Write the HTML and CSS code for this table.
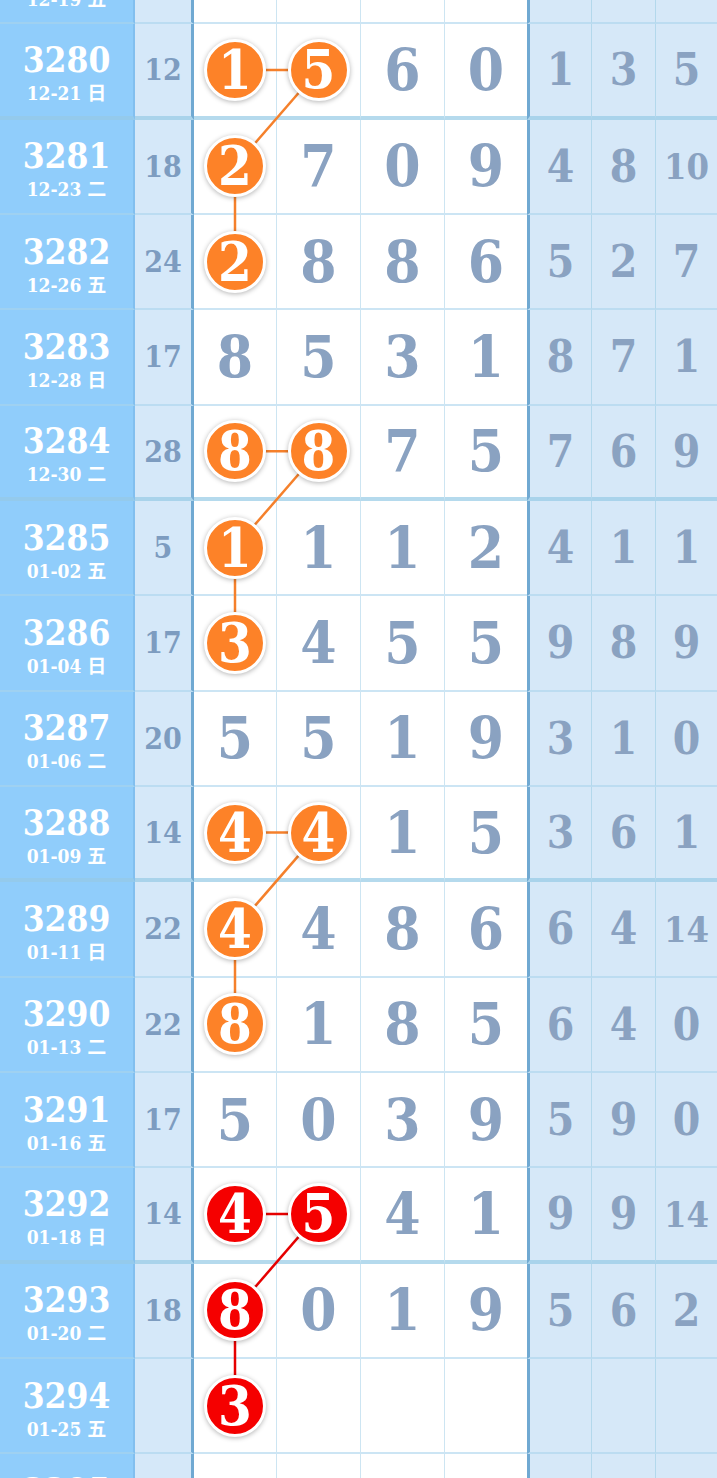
FILE: index.html
```html
<!DOCTYPE html>
<html lang="zh">
<head>
    <meta charset="UTF-8">
    <meta name="viewport" content="width=device-width, initial-scale=1.0">
    <title>走势图</title>
    <link rel="stylesheet" href="styles.css">
</head>
<body>
    <div class="chart" id="chart">
        <svg class="links" id="links"></svg>
    </div>

    <script>
        // issue, date, sum, four digits, three spans, balls (column indexes), group, colour
        const rows = [
            ["3279", "12-19 五", "", ["", "", "", ""], ["", "", ""], [], 0, ""],
            ["3280", "12-21 日", "12", ["1", "5", "6", "0"], ["1", "3", "5"], [0, 1], 1, "orange"],
            ["3281", "12-23 二", "18", ["2", "7", "0", "9"], ["4", "8", "10"], [0], 1, "orange"],
            ["3282", "12-26 五", "24", ["2", "8", "8", "6"], ["5", "2", "7"], [0], 1, "orange"],
            ["3283", "12-28 日", "17", ["8", "5", "3", "1"], ["8", "7", "1"], [], 0, ""],
            ["3284", "12-30 二", "28", ["8", "8", "7", "5"], ["7", "6", "9"], [0, 1], 2, "orange"],
            ["3285", "01-02 五", "5", ["1", "1", "1", "2"], ["4", "1", "1"], [0], 2, "orange"],
            ["3286", "01-04 日", "17", ["3", "4", "5", "5"], ["9", "8", "9"], [0], 2, "orange"],
            ["3287", "01-06 二", "20", ["5", "5", "1", "9"], ["3", "1", "0"], [], 0, ""],
            ["3288", "01-09 五", "14", ["4", "4", "1", "5"], ["3", "6", "1"], [0, 1], 3, "orange"],
            ["3289", "01-11 日", "22", ["4", "4", "8", "6"], ["6", "4", "14"], [0], 3, "orange"],
            ["3290", "01-13 二", "22", ["8", "1", "8", "5"], ["6", "4", "0"], [0], 3, "orange"],
            ["3291", "01-16 五", "17", ["5", "0", "3", "9"], ["5", "9", "0"], [], 0, ""],
            ["3292", "01-18 日", "14", ["4", "5", "4", "1"], ["9", "9", "14"], [0, 1], 4, "red"],
            ["3293", "01-20 二", "18", ["8", "0", "1", "9"], ["5", "6", "2"], [0], 4, "red"],
            ["3294", "01-25 五", "", ["3", "", "", ""], ["", "", ""], [0], 4, "red"],
            ["3295", "01-27 日", "", ["", "", "", ""], ["", "", ""], [], 0, ""]
        ];

        const chart = document.getElementById("chart");
        let html = "";

        rows.forEach(([issue, date, sum, nums, spans, balls, group, colour]) => {
            const sep = Number(issue) % 4 === 0 ? " sep" : "";
            html += `<div class="row${sep}">
                <div class="issue"><b>${issue}</b><span>${date}</span></div>
                <div class="sum">${sum}</div>`;
            nums.forEach((n, i) => {
                const cell = balls.includes(i)
                    ? `<span class="ball ${colour}" data-g="${group}">${n}</span>`
                    : n;
                html += `<div class="num">${cell}</div>`;
            });
            spans.forEach(s => {
                const small = s.length > 1 ? " small" : "";
                html += `<div class="span${small}">${s}</div>`;
            });
            html += `</div>`;
        });

        chart.insertAdjacentHTML("beforeend", html);

        // Join the balls of one group with lines
        const svg = document.getElementById("links");
        const box = chart.getBoundingClientRect();
        const ballEls = [...document.querySelectorAll(".ball")];
        let lines = "";

        ballEls.forEach((ball, i) => {
            const next = ballEls[i + 1];
            if (!next || next.dataset.g !== ball.dataset.g) return;
            const a = ball.getBoundingClientRect();
            const b = next.getBoundingClientRect();
            const colour = ball.classList.contains("red") ? "#e60000" : "#f5802b";
            lines += `<line x1="${a.left + a.width / 2 - box.left}" y1="${a.top + a.height / 2 - box.top}"
                x2="${b.left + b.width / 2 - box.left}" y2="${b.top + b.height / 2 - box.top}"
                stroke="${colour}" stroke-width="2.5" />`;
        });

        svg.innerHTML = lines;
    </script>
</body>
</html>
```

FILE: styles.css
```css
body {
    margin: 0;
    background: #fff;
    overflow: hidden;
    font-family: "DejaVu Serif Condensed", "DejaVu Serif", "Noto Sans CJK SC", serif;
    font-stretch: condensed;
    font-weight: bold;
}
.chart {
    position: relative;
    margin-top: -71px;
}
.links {
    position: absolute;
    top: 0;
    left: 0;
    width: 100%;
    height: 100%;
    z-index: 1;
    pointer-events: none;
}
.row {
    display: grid;
    grid-template-columns: 135px 59px 83px 84px 84px 82px 65px 64px 1fr;
    height: 95.33px;
}
.row > div {
    box-sizing: border-box;
    display: flex;
    align-items: center;
    justify-content: center;
    border-bottom: 2px solid rgba(170, 212, 236, 0.6);
}
.row.sep > div {
    border-bottom: 4px solid rgba(150, 202, 230, 0.7);
}
.issue {
    flex-direction: column;
    padding-top: 6px;
    background: #90cdfb;
    border-right: 2px solid rgba(90, 150, 205, 0.25);
    color: #fff;
}
.issue b {
    font-size: 35px;
    line-height: 36px;
}
.issue span {
    margin-top: 4px;
    font-size: 19px;
    line-height: 22px;
}
.sum {
    background: #d5e8f9;
    border-right: 3px solid #70a9d2;
    color: #7d9cc0;
    font-size: 30px;
}
.num {
    background: #fff;
    border-right: 1px solid #cde5f2;
    color: #8aa2c1;
    font-size: 58px;
}
.num:nth-child(6) { border-right: none; }
.span {
    background: #d6e8f8;
    border-right: 1px solid #b3d8ec;
    color: #8aa2c1;
    font-size: 44px;
}
.span:nth-child(7) { border-left: 3px solid #70a9d2; }
.span:last-child { border-right: none; }
.span.small { font-size: 36px; }
.ball {
    position: relative;
    z-index: 2;
    box-sizing: border-box;
    width: 62px;
    height: 62px;
    border: 3px solid #fff;
    border-radius: 50%;
    box-shadow: 0 1px 5px rgba(0, 0, 0, 0.3);
    display: flex;
    align-items: center;
    justify-content: center;
    color: #fff;
    font-size: 54px;
    line-height: 1;
}
.ball.orange { background: #fd8228; }
.ball.red { background: #f50000; }
```
